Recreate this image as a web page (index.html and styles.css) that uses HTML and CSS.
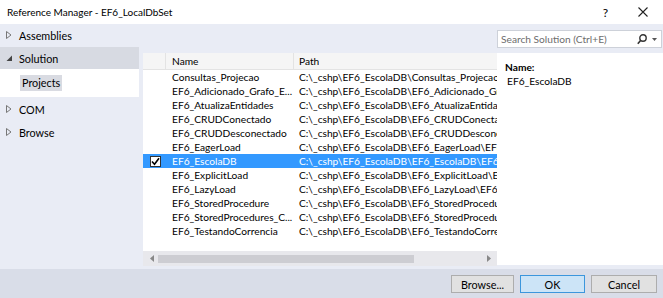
FILE: index.html
```html
<!DOCTYPE html>
<html lang="en">
<head>
    <meta charset="UTF-8">
    <title>Reference Manager - EF6_LocalDbSet</title>
    <link rel="stylesheet" href="styles.css">
</head>
<body>
    <div class="titlebar">
        <span class="title">Reference Manager - EF6_LocalDbSet</span>
        <div class="title-buttons">
            <span class="help">?</span>
            <svg class="close" width="10" height="10" viewBox="0 0 10 10">
                <path d="M0.5 0.5 L9.5 9.5 M9.5 0.5 L0.5 9.5" stroke="#222" stroke-width="1.1" fill="none"/>
            </svg>
        </div>
    </div>

    <div class="main">
        <div class="sidebar">
            <div class="nav-item first">
                <svg class="arrow" width="6" height="8" viewBox="0 0 6 8"><path d="M0.5 0.5 L5 4 L0.5 7.5 Z" fill="none" stroke="#777"/></svg>
                <span>Assemblies</span>
            </div>
            <div class="nav-item open">
                <svg class="arrow" width="6" height="8" viewBox="0 0 6 8"><path d="M6 1.5 L6 7 L0.5 7 Z" fill="#444"/></svg>
                <span>Solution</span>
            </div>
            <div class="sub-items">
                <span class="sub-item">Projects</span>
            </div>
            <div class="nav-item after-sub">
                <svg class="arrow" width="6" height="8" viewBox="0 0 6 8"><path d="M0.5 0.5 L5 4 L0.5 7.5 Z" fill="none" stroke="#777"/></svg>
                <span>COM</span>
            </div>
            <div class="nav-item">
                <svg class="arrow" width="6" height="8" viewBox="0 0 6 8"><path d="M0.5 0.5 L5 4 L0.5 7.5 Z" fill="none" stroke="#777"/></svg>
                <span>Browse</span>
            </div>
        </div>

        <div class="content">
            <div class="toolbar">
                <div class="search">
                    <span class="search-text">Search Solution (Ctrl+E)</span>
                    <svg class="search-icon" width="10" height="11" viewBox="0 0 10 11">
                        <circle cx="6" cy="4" r="3.2" fill="none" stroke="#333" stroke-width="1.4"/>
                        <path d="M3.8 6.3 L0.8 9.8" stroke="#333" stroke-width="1.6"/>
                    </svg>
                    <svg class="drop" width="5" height="3" viewBox="0 0 5 3"><path d="M0 0 L5 0 L2.5 3 Z" fill="#555"/></svg>
                </div>
            </div>

            <div class="panes">
                <div class="list">
                    <div class="grid">
                        <div class="row head">
                            <div class="c-check"></div>
                            <div class="c-name">Name</div>
                            <div class="c-path">Path</div>
                        </div>
                        <div class="row"><div class="c-check"></div><div class="c-name">Consultas_Projecao</div><div class="c-path">C:\_cshp\EF6_EscolaDB\Consultas_Projecao\Consultas_Projecao.csproj</div></div>
                        <div class="row"><div class="c-check"></div><div class="c-name">EF6_Adicionado_Grafo_E...</div><div class="c-path">C:\_cshp\EF6_EscolaDB\EF6_Adicionado_Grafo_Entidades\EF6.csproj</div></div>
                        <div class="row"><div class="c-check"></div><div class="c-name">EF6_AtualizaEntidades</div><div class="c-path">C:\_cshp\EF6_EscolaDB\EF6_AtualizaEntidades\EF6_AtualizaEntidades.csproj</div></div>
                        <div class="row"><div class="c-check"></div><div class="c-name">EF6_CRUDConectado</div><div class="c-path">C:\_cshp\EF6_EscolaDB\EF6_CRUDConectado\EF6_CRUDConectado.csproj</div></div>
                        <div class="row"><div class="c-check"></div><div class="c-name">EF6_CRUDDesconectado</div><div class="c-path">C:\_cshp\EF6_EscolaDB\EF6_CRUDDesconectado\EF6_CRUDDesconectado.csproj</div></div>
                        <div class="row"><div class="c-check"></div><div class="c-name">EF6_EagerLoad</div><div class="c-path">C:\_cshp\EF6_EscolaDB\EF6_EagerLoad\EF6_EagerLoad.csproj</div></div>
                        <div class="row selected">
                            <div class="c-check">
                                <span class="checkbox">
                                    <svg width="9" height="9" viewBox="0 0 9 9"><path d="M1 4.5 L3.5 7.2 L8 1.2" fill="none" stroke="#000" stroke-width="1.6"/></svg>
                                </span>
                            </div>
                            <div class="c-name">EF6_EscolaDB</div>
                            <div class="c-path">C:\_cshp\EF6_EscolaDB\EF6_EscolaDB\EF6_EscolaDB.csproj</div>
                        </div>
                        <div class="row"><div class="c-check"></div><div class="c-name">EF6_ExplicitLoad</div><div class="c-path">C:\_cshp\EF6_EscolaDB\EF6_ExplicitLoad\EF6_ExplicitLoad.csproj</div></div>
                        <div class="row"><div class="c-check"></div><div class="c-name">EF6_LazyLoad</div><div class="c-path">C:\_cshp\EF6_EscolaDB\EF6_LazyLoad\EF6_LazyLoad.csproj</div></div>
                        <div class="row"><div class="c-check"></div><div class="c-name">EF6_StoredProcedure</div><div class="c-path">C:\_cshp\EF6_EscolaDB\EF6_StoredProcedure\EF6_StoredProcedure.csproj</div></div>
                        <div class="row"><div class="c-check"></div><div class="c-name">EF6_StoredProcedures_C...</div><div class="c-path">C:\_cshp\EF6_EscolaDB\EF6_StoredProcedures_CodeFirst\EF6.csproj</div></div>
                        <div class="row"><div class="c-check"></div><div class="c-name">EF6_TestandoCorrencia</div><div class="c-path">C:\_cshp\EF6_EscolaDB\EF6_TestandoCorrencia\EF6_TestandoCorrencia.csproj</div></div>
                    </div>
                    <div class="hscroll">
                        <svg width="4" height="7" viewBox="0 0 4 7"><path d="M4 0 L0 3.5 L4 7 Z" fill="#888"/></svg>
                        <div class="track"><div class="thumb"></div></div>
                        <svg width="4" height="7" viewBox="0 0 4 7"><path d="M0 0 L4 3.5 L0 7 Z" fill="#888"/></svg>
                    </div>
                </div>
                <div class="details">
                    <div class="label">Name:</div>
                    <div class="value">EF6_EscolaDB</div>
                </div>
            </div>
        </div>
    </div>

    <div class="footer">
        <button class="btn">Browse...</button>
        <button class="btn primary">OK</button>
        <button class="btn">Cancel</button>
    </div>
</body>
</html>
```

FILE: styles.css
```css
* {
    box-sizing: border-box;
}

body {
    margin: 0;
    width: 663px;
    height: 298px;
    overflow: hidden;
    background-color: #e9ecf5;
    font-family: Lato, "Noto Sans", sans-serif;
    font-size: 10.2px;
    color: #000;
}

.titlebar {
    height: 24px;
    background-color: #fff;
    display: flex;
    align-items: center;
    justify-content: space-between;
    padding-left: 7px;
}

.title {
    font-size: 10px;
}

.title-buttons {
    display: flex;
    align-items: center;
}

.help {
    font-size: 12px;
    margin-right: 30px;
}

.close {
    margin-right: 15px;
}

.main {
    display: flex;
    height: 245px;
}

/* left navigation */
.sidebar {
    width: 139px;
    padding-top: 2px;
    font-size: 10.8px;
}

.nav-item {
    display: flex;
    align-items: center;
    height: 18px;
    margin-top: 5px;
    padding-left: 6px;
}

.nav-item.first {
    margin-top: 0;
}

.nav-item.after-sub {
    margin-top: 3px;
}

.nav-item.open {
    height: 22px;
    margin-top: 3px;
    background-color: #d7dae2;
}

.arrow {
    margin-right: 7px;
}

.sub-items {
    background-color: #fff;
    height: 28px;
    padding-left: 20px;
    display: flex;
    align-items: center;
}

.sub-item {
    background-color: #d9dbe2;
    padding: 1px 2px;
    line-height: 14px;
}

/* right side */
.content {
    flex: 1;
    margin-left: 4px;
    display: flex;
    flex-direction: column;
}

.toolbar {
    height: 29px;
    display: flex;
    justify-content: flex-end;
    padding-top: 6px;
}

.search {
    width: 165px;
    height: 18px;
    background-color: #fff;
    border: 1px solid #cdd1d9;
    display: flex;
    align-items: center;
    padding-left: 3px;
    margin-right: 1px;
}

.search-text {
    flex: 1;
    color: #6d6d6d;
}

.search-icon {
    margin-right: 5px;
}

.drop {
    margin-right: 4px;
}

.panes {
    display: flex;
    height: 213px;
}

.list {
    width: 354px;
    display: flex;
    flex-direction: column;
}

.grid {
    flex: 1;
    background-color: #fff;
    overflow: hidden;
}

.row {
    display: flex;
    height: 14px;
    line-height: 14px;
    white-space: nowrap;
}

.row.head {
    height: 17px;
    line-height: 16px;
    background-color: #f5f5f5;
    border-bottom: 1px solid #e3e3e3;
}

.row.head .c-check,
.row.head .c-name {
    border-right: 1px solid #e3e3e3;
}

.row.selected {
    background-color: #3399ff;
    color: #fff;
}

.c-check {
    width: 23px;
    flex-shrink: 0;
    display: flex;
    align-items: center;
    padding-left: 7px;
}

.c-name {
    width: 128px;
    flex-shrink: 0;
    padding-left: 6px;
    overflow: hidden;
    text-overflow: ellipsis;
}

.c-path {
    padding-left: 5px;
    overflow: hidden;
}

.checkbox {
    width: 11px;
    height: 11px;
    background-color: #fff;
    border: 1px solid #333;
    display: flex;
    align-items: center;
    justify-content: center;
}

.hscroll {
    height: 15px;
    background-color: #e8e8ec;
    display: flex;
    align-items: center;
    padding: 0 6px 0 7px;
}

.track {
    flex: 1;
    margin: 0 6px 0 4px;
}

.thumb {
    width: 256px;
    height: 8px;
    background-color: #cdcdd2;
}

.details {
    flex: 1;
    background-color: #fff;
    height: 212px;
    padding: 8px 0 0 8px;
    line-height: 13px;
}

.label {
    font-weight: bold;
}

.value {
    padding-left: 2px;
    margin-top: 1px;
}

.footer {
    height: 29px;
    background-color: #d9dde8;
    display: flex;
    justify-content: flex-end;
    align-items: flex-start;
    padding-top: 6px;
    padding-right: 6px;
    gap: 6px;
}

.btn {
    height: 18px;
    width: 63px;
    padding: 0;
    font-family: Lato, "Noto Sans", sans-serif;
    font-size: 10.8px;
    color: #000;
    background-color: #e1e1e1;
    border: 1px solid #adadad;
}

.btn.primary {
    width: 65px;
    background-color: #cce4f7;
    border-color: #3c96dc;
}

.btn:last-child {
    width: 66px;
}
```
